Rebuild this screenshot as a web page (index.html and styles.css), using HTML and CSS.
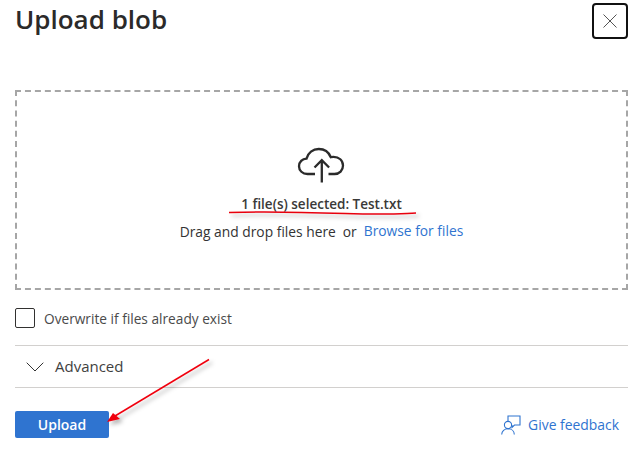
FILE: index.html
```html
<!DOCTYPE html>
<html lang="en">
<head>
<meta charset="utf-8">
<title>Upload blob</title>
<link rel="stylesheet" href="styles.css">
</head>
<body>
<main class="panel">
  <header class="head">
    <h1 class="title">Upload blob</h1>
    <button class="close" aria-label="Close">
      <svg width="14" height="14" viewBox="0 0 14 14"><path d="M.5.5l13 13M13.500.5l-13 13" fill="none" stroke="#555" stroke-width="1"/></svg>
    </button>
  </header>
  <section class="drop">
    <svg class="cloud" width="50" height="38" viewBox="0 0 50 38"><path d="M18 27H10.500C5.500 27 2 23.500 2 19.200 2 15 5.300 11.800 9.500 11.600 11 6 15.800 2 21.800 2c5.400 0 10 3.300 12 8.200 1-.3 1.800-.4 2.700-.4C42 9.800 46 13.500 46 18.500S42.500 27 37.500 27h-6" fill="none" stroke="#2b2b2b" stroke-width="2.300"/><path d="M24.800 35.500V13.500M17.500 20.500l7.300-7.300 7.300 7.300" fill="none" stroke="#2b2b2b" stroke-width="2.300"/></svg>
    <p class="selected">1 file(s) selected: Test.txt</p>
    <p class="hint"><span>Drag and drop files here</span><span>or</span><a class="link" href="#">Browse for files</a></p>
  </section>
  <label class="check"><span class="box"></span><span>Overwrite if files already exist</span></label>
  <div class="advanced">
    <svg width="18" height="10" viewBox="0 0 18 10"><path d="M.7.7L9 9l8.300-8.300" fill="none" stroke="#333" stroke-width="1"/></svg>
    <span class="advanced-label">Advanced</span>
  </div>
  <footer class="foot">
    <button class="upload">Upload</button>
    <a class="feedback" href="#">
      <svg width="20" height="20" viewBox="0 0 20 20"><g fill="none" stroke="#2f74d0" stroke-width="1.100"><path d="M7 6V1h12v9h-5.500l-2.500 2.500V10"/><circle cx="7" cy="10" r="3.600"/><path d="M.7 19.500c0-3.500 2.800-5.800 6.300-5.800s6.300 2.300 6.300 5.800"/></g></svg>
      <span>Give feedback</span>
    </a>
  </footer>
</main>
<svg class="marks" width="644" height="458" viewBox="0 0 644 458" aria-hidden="true">
  <defs>
    <filter id="sh" x="-20%" y="-20%" width="140%" height="140%"><feDropShadow dx="3" dy="3" stdDeviation="2" flood-color="#000" flood-opacity=".3"/></filter>
  </defs>
  <g filter="url(#sh)">
    <path d="M229 212.500C270 211 300 212 345 213.500S395 214 416 213" fill="none" stroke="#e8000f" stroke-width="1.500"/>
    <path d="M209 359.500L115 416" fill="none" stroke="#f0000f" stroke-width="1.500"/>
    <path d="M107 422L113 413 120 419Z" fill="#f0000f"/>
  </g>
</svg>
</body>
</html>
```
FILE: styles.css
```css
* { box-sizing: border-box; }
html, body { margin: 0; height: 100%; background: #fff; }
body {
  position: relative;
  width: 644px;
  height: 458px;
  overflow: hidden;
  font-family: "Open Sans", "Noto Sans", sans-serif;
  color: #323130;
}
.panel {
  display: flex;
  flex-direction: column;
  padding: 3px 16px 0 15px;
}
.head {
  display: flex;
  justify-content: space-between;
  align-items: flex-start;
  height: 87px;
}
.title {
  margin: 0;
  font-size: 26px;
  line-height: 33px;
  font-weight: 600;
  color: #2b2a29;
}
.close {
  display: flex;
  align-items: center;
  justify-content: center;
  width: 36px;
  height: 36px;
  padding: 0;
  background: #fff;
  border: 2px solid #111;
  border-radius: 4px;
}
.drop {
  display: flex;
  flex-direction: column;
  align-items: center;
  height: 200px;
  padding-top: 55px;
  border: 2px dashed #a6a6a6;
}
.cloud { display: block; margin-bottom: 10px; }
.selected {
  margin: 0;
  font-size: 13.500px;
  line-height: 18px;
  font-weight: 600;
  color: #3a3938;
}
.hint {
  display: flex;
  gap: 7px;
  margin: 10px 0 0;
  font-size: 13.800px;
  line-height: 18px;
  color: #333;
}
.link { color: #2f74d0; text-decoration: none; position: relative; top: -1px; }
.check {
  display: flex;
  align-items: center;
  gap: 9px;
  height: 20px;
  margin-top: 18px;
  font-size: 13.700px;
  color: #4a4a4a;
}
.box {
  width: 20px;
  height: 20px;
  border: 1px solid #323130;
  border-radius: 2px;
}
.advanced {
  display: flex;
  align-items: center;
  gap: 11px;
  height: 43px;
  margin-top: 17px;
  padding-left: 11px;
  border-top: 1px solid #d2d0ce;
  border-bottom: 1px solid #d2d0ce;
  font-size: 15px;
  color: #3f3f3f;
}
.advanced-label { margin-bottom: 2px; }
.foot {
  display: flex;
  justify-content: space-between;
  align-items: center;
  height: 27px;
  margin-top: 23px;
}
.upload {
  width: 94px;
  height: 27px;
  padding: 0;
  background: #2f74d0;
  border: 0;
  border-radius: 2px;
  color: #fff;
  font: 600 14px "Open Sans", "Noto Sans", sans-serif;
}
.feedback {
  display: flex;
  align-items: center;
  gap: 7px;
  padding-right: 9px;
  color: #2f74d0;
  font-size: 13.900px;
  text-decoration: none;
}
.marks {
  position: absolute;
  left: 0;
  top: 0;
  pointer-events: none;
}
```
